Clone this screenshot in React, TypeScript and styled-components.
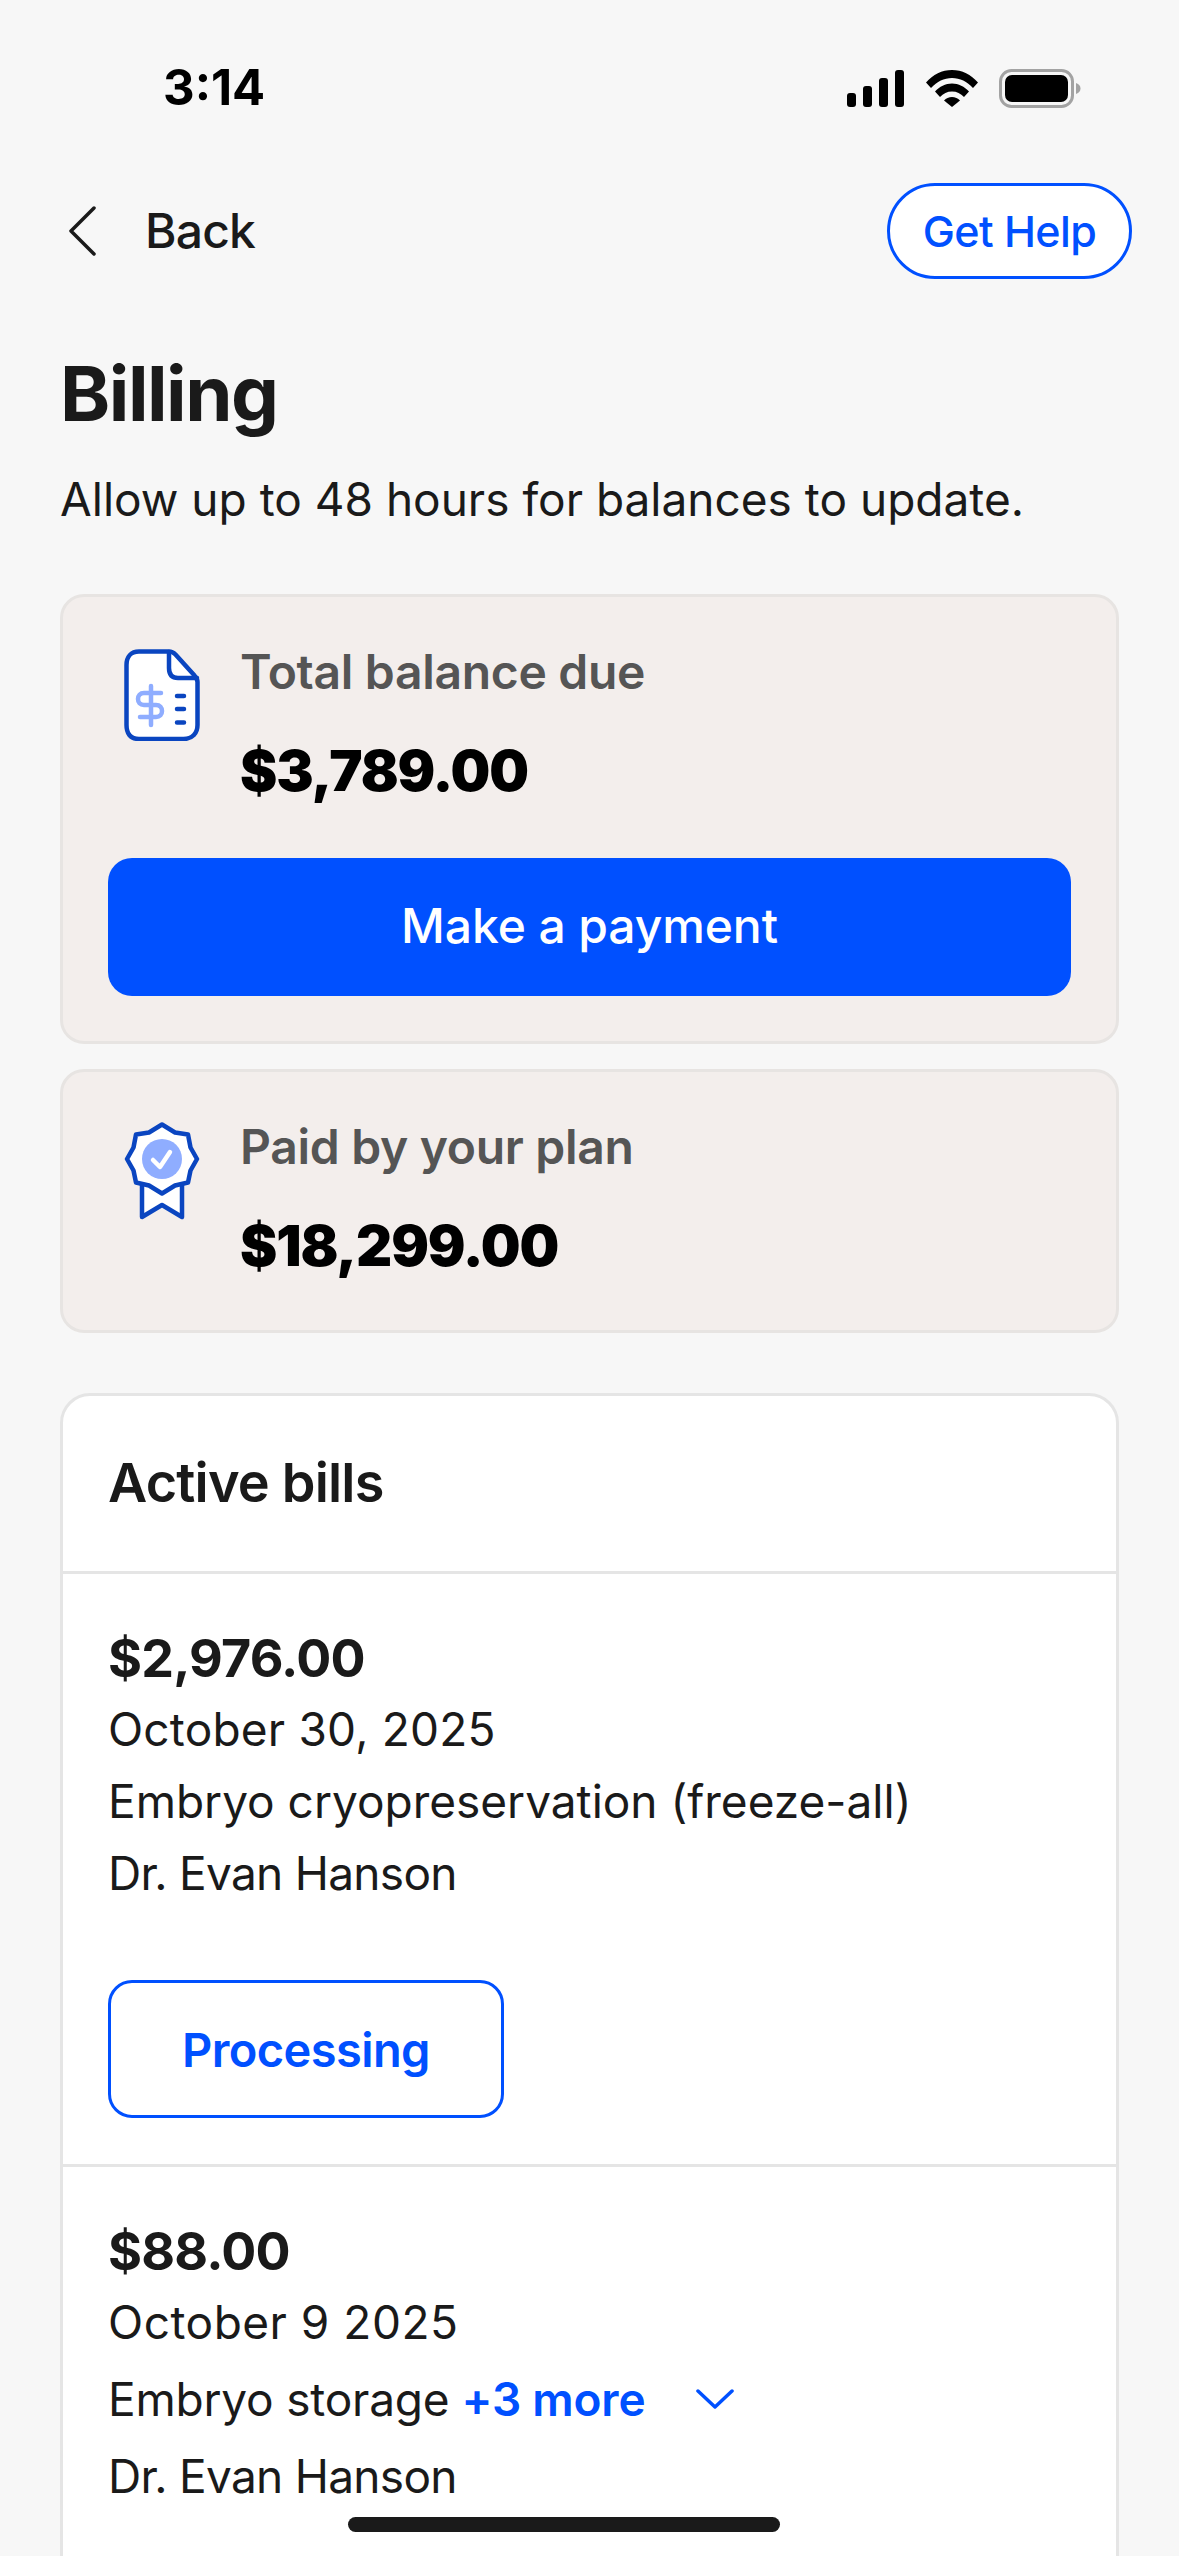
import React from 'react';
import styled, { createGlobalStyle } from 'styled-components';

const BLUE = '#0050ff';
const INK = '#1a1a1a';

const GlobalStyle = createGlobalStyle`
  html, body {
    margin: 0;
    padding: 0;
    background: #f7f7f7;
  }
  * { box-sizing: border-box; }
`;

const Page = styled.div`
  position: relative;
  width: 1179px;
  height: 2556px;
  overflow: hidden;
  background: #f7f7f7;
  font-family: Inter, "Liberation Sans", sans-serif;
  color: ${INK};
`;

const StatusBar = styled.div`
  height: 172px;
  padding: 58px 98px 0 163px;
  display: flex;
  justify-content: space-between;
  align-items: flex-start;
`;

const Clock = styled.span`
  font-size: 49px;
  line-height: 60px;
  font-weight: 700;
  color: #000;
`;

const StatusIcons = styled.div`
  display: flex;
  align-items: center;
  gap: 21px;
  padding-top: 11px;
`;

const NavRow = styled.div`
  height: 110px;
  padding: 7px 47px 0 68px;
  display: flex;
  align-items: center;
  justify-content: space-between;
`;

const BackLink = styled.div`
  display: flex;
  align-items: center;
  gap: 49px;
  font-size: 48px;
  font-weight: 500;
  letter-spacing: -0.8px;
`;

const HelpButton = styled.button`
  width: 245px;
  height: 96px;
  border: 3px solid ${BLUE};
  border-radius: 48px;
  background: #fff;
  color: ${BLUE};
  font: 500 43px Inter, "Liberation Sans", sans-serif;
  letter-spacing: -0.6px;
  padding: 0;
`;

const Content = styled.div`
  padding: 0 60px;
`;

const Title = styled.h1`
  margin: 66px 0 0;
  font-size: 76px;
  line-height: 90px;
  font-weight: 700;
  letter-spacing: -1.5px;
`;

const Subtitle = styled.p`
  margin: 31px 0 0;
  font-size: 46px;
  line-height: 60px;
  font-weight: 400;
  letter-spacing: 0;
`;

const SummaryCard = styled.section<{ $mt: number; $pb: number }>`
  margin-top: ${p => p.$mt}px;
  padding: 47px 45px ${p => p.$pb}px;
  background: #f3eeec;
  border: 3px solid #e7e4e2;
  border-radius: 24px;
`;

const SummaryRow = styled.div`
  display: flex;
  gap: 37px;
`;

const IconSlot = styled.div<{ $top: number }>`
  width: 95px;
  padding: ${p => p.$top}px 0 0 16px;
`;

const SummaryLabel = styled.div`
  font-size: 48px;
  line-height: 56px;
  font-weight: 600;
  color: #555;
  letter-spacing: -0.3px;
`;

const SummaryValue = styled.div`
  margin-top: 36px;
  font-size: 56px;
  line-height: 70px;
  font-weight: 900;
  color: #000;
  letter-spacing: -1.1px;
`;

const PayButton = styled.button`
  display: block;
  width: 100%;
  height: 138px;
  margin-top: 52px;
  padding: 0 0 3px;
  border: 0;
  border-radius: 24px;
  background: ${BLUE};
  color: #fff;
  font: 500 48px Inter, "Liberation Sans", sans-serif;
  letter-spacing: -0.1px;
`;

const BillsCard = styled.section`
  margin-top: 60px;
  height: 1300px;
  background: #fff;
  border: 3px solid #e5e5e5;
  border-radius: 30px;
`;

const BillsHeader = styled.h2`
  margin: 0;
  height: 178px;
  padding: 0 45px 3px;
  display: flex;
  align-items: center;
  font-size: 54px;
  font-weight: 600;
  letter-spacing: -0.8px;
  border-bottom: 3px solid #e5e5e5;
`;

const Bill = styled.article<{ $divided?: boolean }>`
  padding: 50px 45px 46px;
  border-bottom: ${p => (p.$divided ? '3px solid #e5e5e5' : '0')};
`;

const Amount = styled.div`
  font-size: 52px;
  line-height: 69px;
  font-weight: 700;
  letter-spacing: -0.8px;
`;

const BillLine = styled.div<{ $h?: number; $ls?: number }>`
  display: flex;
  align-items: center;
  font-size: 46px;
  line-height: ${p => p.$h ?? 72}px;
  font-weight: 400;
  letter-spacing: ${p => p.$ls ?? -0.2}px;
  white-space: pre;
`;

const More = styled.span`
  margin-left: 12px;
  color: ${BLUE};
  font-weight: 600;
`;

const Caret = styled.svg`
  margin-left: 51px;
`;

const StatusPill = styled.button`
  display: block;
  width: 396px;
  height: 138px;
  margin-top: 71px;
  border: 3px solid ${BLUE};
  border-radius: 24px;
  background: #fff;
  color: ${BLUE};
  font: 600 47px Inter, "Liberation Sans", sans-serif;
  letter-spacing: -0.6px;
  padding: 0;
`;

const HomeBar = styled.div`
  position: absolute;
  left: 348px;
  top: 2517px;
  width: 432px;
  height: 15px;
  border-radius: 8px;
  background: #1a1a1a;
`;

const Signal = () => (
  <svg width="59" height="37" viewBox="0 0 59 37" fill="#000">
    <rect x="1" y="23" width="9" height="14" rx="3" />
    <rect x="17" y="16" width="9" height="21" rx="3" />
    <rect x="33" y="8" width="9" height="29" rx="3" />
    <rect x="49" y="0" width="9" height="37" rx="3" />
  </svg>
);

const Wifi = () => (
  <svg width="52" height="37" viewBox="0 0 52 37" fill="#000">
    <path d="M0 12.500C7 4.500 16 0 26 0s19 4.500 26 12.500l-5 5.500C41 11.500 34 8 26 8S11 11.500 5 18z" />
    <path d="M9 21.500C13.500 16.500 19.500 13.500 26 13.500s12.500 3 17 8l-5 5.500c-3.200-3.500-7.300-5.500-12-5.500s-8.800 2-12 5.500z" />
    <path d="M18 30.500c2-2.300 4.900-3.500 8-3.500s6 1.200 8 3.500L26 37z" />
  </svg>
);

const Battery = () => (
  <svg width="82" height="39" viewBox="0 0 82 39">
    <rect x="1.500" y="1.500" width="72" height="36" rx="11" fill="none" stroke="#a3a3a3" strokeWidth="3" />
    <rect x="6" y="6" width="63" height="27" rx="7" fill="#000" />
    <path d="M77 14c3 1 4.500 3 4.500 5.500S80 24 77 25z" fill="#a3a3a3" />
  </svg>
);

const BillIcon = () => (
  <svg width="76" height="92" viewBox="0 0 76 92" fill="none" strokeLinecap="round" strokeLinejoin="round">
    <path d="M15 2.500h30c2.500 0 4.500 1 6.500 3l19 21c2 2 3 4 3 6.500v43c0 8-5 14-14 14H15C6 90 2.500 84 2.500 76V16C2.500 8 7 2.500 15 2.500z" fill="#fff" stroke="#0a45c0" strokeWidth="4.500" />
    <path d="M45 3v16c0 7 3 10 9 10h19" stroke="#0a45c0" strokeWidth="4.500" />
    <path d="M37 44H20c-4 0-6 2.500-6 6s2 6 6 6h12c4 0 6 2.500 6 6s-2 6-6 6H16M27 37v39" stroke="#8fadff" strokeWidth="4.500" />
    <path d="M53 47h7M53 60h7M53 73.500h7" stroke="#0a45c0" strokeWidth="4.500" />
  </svg>
);

const PlanIcon = () => (
  <svg width="76" height="98" viewBox="0 0 76 98" fill="none" strokeLinecap="round" strokeLinejoin="round">
    <path d="M18 58v37l20-12 20 12V58" fill="#fff" stroke="#0a45c0" strokeWidth="4.500" />
    <path d="M38 2.500l13 8 13 2 2.500 13L73 37l-6.500 11.500-2.500 12-13 3-13 8-13-8-13-3-2.500-12L3 37l6.500-11.500 2.500-13 13-2z" fill="#fff" stroke="#0a45c0" strokeWidth="4.500" />
    <circle cx="38" cy="37" r="20" fill="#8fadff" />
    <path d="M29 38l7 7 10-15" stroke="#fff" strokeWidth="4.500" />
  </svg>
);

const App = () => (
  <Page>
    <GlobalStyle />
    <StatusBar>
      <Clock>3:14</Clock>
      <StatusIcons>
        <Signal />
        <Wifi />
        <Battery />
      </StatusIcons>
    </StatusBar>

    <NavRow>
      <BackLink>
        <svg width="28" height="50" viewBox="0 0 28 50" fill="none">
          <path d="M26 2L3 25l23 23" stroke={INK} strokeWidth="3.500" strokeLinecap="round" strokeLinejoin="round" />
        </svg>
        Back
      </BackLink>
      <HelpButton>Get Help</HelpButton>
    </NavRow>

    <Content>
      <Title>Billing</Title>
      <Subtitle>Allow up to 48 hours for balances to update.</Subtitle>

      <SummaryCard $mt={65} $pb={45}>
        <SummaryRow>
          <IconSlot $top={5}><BillIcon /></IconSlot>
          <div>
            <SummaryLabel>Total balance due</SummaryLabel>
            <SummaryValue>$3,789.00</SummaryValue>
          </div>
        </SummaryRow>
        <PayButton>Make a payment</PayButton>
      </SummaryCard>

      <SummaryCard $mt={25} $pb={49}>
        <SummaryRow>
          <IconSlot $top={3}><PlanIcon /></IconSlot>
          <div>
            <SummaryLabel>Paid by your plan</SummaryLabel>
            <SummaryValue>$18,299.00</SummaryValue>
          </div>
        </SummaryRow>
      </SummaryCard>

      <BillsCard>
        <BillsHeader>Active bills</BillsHeader>
        <Bill $divided>
          <Amount>$2,976.00</Amount>
          <BillLine $ls={0.2}>October 30, 2025</BillLine>
          <BillLine $ls={0}>Embryo cryopreservation (freeze-all)</BillLine>
          <BillLine $ls={-0.7}>Dr. Evan Hanson</BillLine>
          <StatusPill>Processing</StatusPill>
        </Bill>
        <Bill>
          <Amount>$88.00</Amount>
          <BillLine $ls={0.5}>October 9 2025</BillLine>
          <BillLine $h={82}>
            Embryo storage<More>+3 more</More>
            <Caret width="38" height="20" viewBox="0 0 38 20" fill="none">
              <path d="M2 2l17 16L36 2" stroke={BLUE} strokeWidth="3.500" strokeLinecap="round" strokeLinejoin="round" />
            </Caret>
          </BillLine>
          <BillLine $ls={-0.7}>Dr. Evan Hanson</BillLine>
        </Bill>
      </BillsCard>
    </Content>

    <HomeBar />
  </Page>
);

export default App;
